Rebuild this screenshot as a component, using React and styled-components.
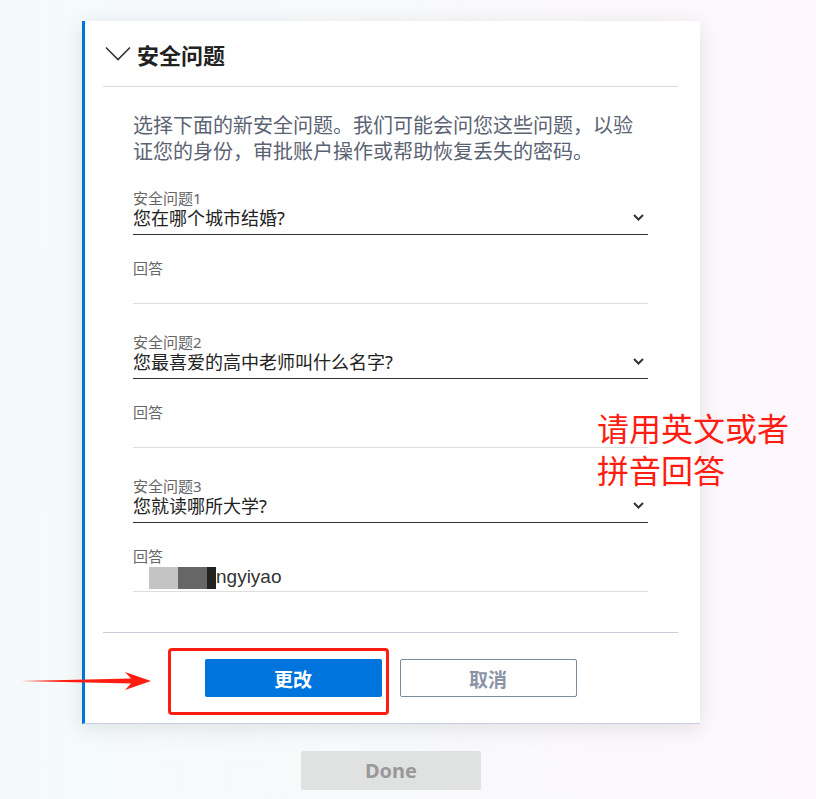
import React from "react";
import styled, { createGlobalStyle } from "styled-components";

const GlobalStyle = createGlobalStyle`
  html, body {
    margin: 0;
    padding: 0;
  }
  body {
    font-family: "Noto Sans", "Noto Sans CJK SC", sans-serif;
  }
`;

const questions = [
  { label: "安全问题1", question: "您在哪个城市结婚?", answer: "" },
  { label: "安全问题2", question: "您最喜爱的高中老师叫什么名字?", answer: "" },
  { label: "安全问题3", question: "您就读哪所大学?", answer: "ngyiyao", redacted: true },
];

function Chevron({ size = 26 }) {
  return (
    <svg width={size} height={size / 2 + 2} viewBox="0 0 26 15" fill="none">
      <path d="M1 1.5 L13 13.5 L25 1.5" stroke="#333" strokeWidth="1.6" />
    </svg>
  );
}

function SmallChevron() {
  return (
    <svg width="11" height="7" viewBox="0 0 11 7" fill="none">
      <path d="M1 1 L5.5 5.5 L10 1" stroke="#333" strokeWidth="2" />
    </svg>
  );
}

function Arrow() {
  return (
    <svg width="132" height="24" viewBox="0 0 132 24">
      <path d="M0 12 L110 9.5 L104 3 L130 12 L104 21 L110 14.5 Z" fill="#ff1d12" />
    </svg>
  );
}

function App() {
  return (
    <Page>
      <GlobalStyle />
      <Column>
        <Card>
          <Header>
            <Chevron />
            <Title>安全问题</Title>
          </Header>
          <Body>
            <Description>
              选择下面的新安全问题。我们可能会问您这些问题，以验证您的身份，审批账户操作或帮助恢复丢失的密码。
            </Description>
            {questions.map((q) => (
              <Group key={q.label}>
                <FieldLabel>{q.label}</FieldLabel>
                <Select>
                  <span>{q.question}</span>
                  <SmallChevron />
                </Select>
                <AnswerLabel>回答</AnswerLabel>
                <Answer>
                  {q.redacted && (
                    <>
                      <Redact $color="#c4c4c4" $width={29} />
                      <Redact $color="#666" $width={29} />
                      <Redact $color="#222" $width={9} />
                    </>
                  )}
                  {q.answer}
                </Answer>
              </Group>
            ))}
          </Body>
          <Footer>
            <PrimaryButton>更改</PrimaryButton>
            <SecondaryButton>取消</SecondaryButton>
          </Footer>
        </Card>
        <DoneButton>Done</DoneButton>
      </Column>

      <RedBox />
      <ArrowWrap>
        <Arrow />
      </ArrowWrap>
      <Note>
        请用英文或者
        <br />
        拼音回答
      </Note>
    </Page>
  );
}

const Page = styled.div`
  position: relative;
  width: 816px;
  height: 799px;
  overflow: hidden;
  background: linear-gradient(90deg, #f4fafb 0%, #f8f9fb 50%, #fdf7fc 100%);
`;

const Column = styled.div`
  display: flex;
  flex-direction: column;
  align-items: center;
  width: 618px;
  padding: 21px 0 0 82px;
`;

const Card = styled.div`
  width: 100%;
  box-sizing: border-box;
  background: #fff;
  border-left: 3px solid #0074dd;
  border-bottom: 1px solid #c9cde0;
  box-shadow: 0 4px 18px rgba(60, 60, 80, 0.13);
`;

const Header = styled.div`
  display: flex;
  align-items: center;
  gap: 6px;
  height: 65px;
  margin: 0 22px 0 18px;
  padding-left: 2px;
  border-bottom: 1px solid #dcdcdc;
`;

const Title = styled.h2`
  margin: 0;
  font-size: 22px;
  font-weight: 700;
  color: #222;
  font-family: "Noto Sans CJK SC", sans-serif;
`;

const Body = styled.div`
  padding: 25px 52px 40px 48px;
`;

const Description = styled.p`
  margin: 0 0 25px;
  font-size: 20px;
  line-height: 26px;
  color: #5b6372;
  font-family: "Noto Sans CJK SC", sans-serif;
`;

const Group = styled.div`
  display: flex;
  flex-direction: column;
  & + & {
    margin-top: 29px;
  }
`;

const FieldLabel = styled.div`
  font-size: 15px;
  line-height: 18px;
  color: #666;
`;

const Select = styled.div`
  display: flex;
  justify-content: space-between;
  align-items: center;
  box-sizing: border-box;
  height: 28px;
  padding: 0 4px 7px 0;
  border-bottom: 1px solid #333;
  font-size: 18px;
  color: #222;
`;

const AnswerLabel = styled(FieldLabel)`
  margin-top: 24px;
`;

const Answer = styled.div`
  display: flex;
  align-items: center;
  height: 27px;
  box-sizing: border-box;
  padding-bottom: 2px;
  border-bottom: 1px solid #dedede;
  font-family: "Liberation Sans", sans-serif;
  font-size: 19px;
  color: #333;
`;

const Redact = styled.span`
  display: inline-block;
  align-self: flex-end;
  width: ${(p) => p.$width}px;
  height: 22px;
  background: ${(p) => p.$color};
  &:first-child {
    margin-left: 16px;
  }
`;

const Footer = styled.div`
  display: flex;
  justify-content: center;
  gap: 18px;
  margin: 0 22px 0 18px;
  padding: 26px 0 26px;
  border-top: 1px solid #c9cdd9;
`;

const Button = styled.button`
  width: 177px;
  height: 38px;
  border-radius: 2px;
  font-family: "Noto Sans CJK SC", sans-serif;
  font-size: 19px;
  font-weight: 700;
  cursor: pointer;
`;

const PrimaryButton = styled(Button)`
  background: #0074dd;
  border: none;
  color: #fff;
`;

const SecondaryButton = styled(Button)`
  background: #fff;
  border: 1px solid #7c8a9e;
  color: #8a94a6;
`;

const DoneButton = styled.button`
  margin-top: 27px;
  width: 180px;
  height: 39px;
  border: none;
  border-radius: 2px;
  background: #e0e1e1;
  color: #999;
  font-family: "Noto Sans", sans-serif;
  font-size: 20px;
  font-weight: 700;
`;

const RedBox = styled.div`
  position: absolute;
  left: 168px;
  top: 648px;
  width: 221px;
  height: 67px;
  box-sizing: border-box;
  border: 3px solid #ff1d12;
  border-radius: 4px;
`;

const ArrowWrap = styled.div`
  position: absolute;
  left: 21px;
  top: 669px;
  line-height: 0;
`;

const Note = styled.div`
  position: absolute;
  left: 597px;
  top: 406px;
  font-family: "Noto Sans CJK SC", sans-serif;
  font-size: 32px;
  line-height: 42px;
  color: #ff1d12;
`;

export default App;
